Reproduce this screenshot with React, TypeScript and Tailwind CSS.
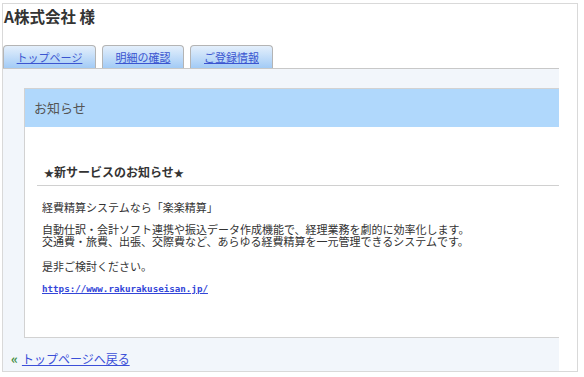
import React from "react";

const jp = { fontFamily: '"Noto Sans CJK JP", "Noto Sans", sans-serif' };

function Tab({ label, w }: { label: string; w: string }) {
  return (
    <div
      className={`${w} h-[23px] border border-b-0 border-[#b4b4b4] rounded-t-[4px] bg-gradient-to-b from-[#e4effb] to-[#a2cbf6] flex items-center justify-center`}
    >
      <a href="#" className="text-[11px] leading-[14px] text-[#3b55d0] underline">
        {label}
      </a>
    </div>
  );
}

export default function App() {
  return (
    <div className="w-[584px] h-[377px] bg-white pt-[3px] pl-[2px] text-[#333]" style={jp}>
      <div className="w-[576px] h-[369px] border border-[#d9d9d9] flex flex-col">
        <div className="h-[41px] pt-[2px] pl-[1px]">
          <h1 className="text-[15.5px] leading-[20px] font-bold text-[#333]">A株式会社 様</h1>
        </div>
        <div className="flex gap-[6px] h-[23px]">
          <Tab label="トップページ" w="w-[93px]" />
          <Tab label="明細の確認" w="w-[82px]" />
          <Tab label="ご登録情報" w="w-[83px]" />
        </div>
        <div className="w-[556px] flex-1 bg-[#f2f6fb] border-t border-[#c8c8c8] flex flex-col">
          <div className="ml-[21px] mt-[19px] w-[535px] border border-r-0 border-[#d2d2d2] bg-white">
            <div className="h-[38px] bg-[#b0d8fc] flex items-center pl-[9px] text-[13px] text-[#555]">
              お知らせ
            </div>
            <div className="pb-[42px]">
              <div className="ml-[12px] mt-[38px] pl-[7px] pb-[5px] border-b border-[#d0d0d0] text-[12px] leading-[14px] font-semibold text-[#333]">
                <span className="text-[10px]">★</span>新サービスのお知らせ<span className="text-[10px]">★</span>
              </div>
              <div className="pl-[17px] text-[11px] leading-[12px] text-[#333]">
                <p className="mt-[15px]">経費精算システムなら「楽楽精算」</p>
                <p className="mt-[10px] leading-[12px]">
                  自動仕訳・会計ソフト連携や振込データ作成機能で、経理業務を劇的に効率化します。
                  <br />
                  交通費・旅費、出張、交際費など、あらゆる経費精算を一元管理できるシステムです。
                </p>
                <p className="mt-[13px]">是非ご検討ください。</p>
                <p className="mt-[9px]">
                  <a
                    href="#"
                    className="text-[9.2px] text-[#3346d8] underline font-semibold"
                    style={{ fontFamily: '"DejaVu Sans Mono", "Liberation Mono", monospace' }}
                  >
                    https://www.rakurakuseisan.jp/
                  </a>
                </p>
              </div>
            </div>
          </div>
          <div className="mt-[13px] ml-[8px] flex items-center h-[16px] text-[12px]">
            <span className="text-[#3d8c3d] font-bold text-[13px] leading-[16px] mr-[4px]">«</span>
            <a href="#" className="text-[#3b4fd8] underline leading-[16px]">
              トップページへ戻る
            </a>
          </div>
        </div>
      </div>
    </div>
  );
}
